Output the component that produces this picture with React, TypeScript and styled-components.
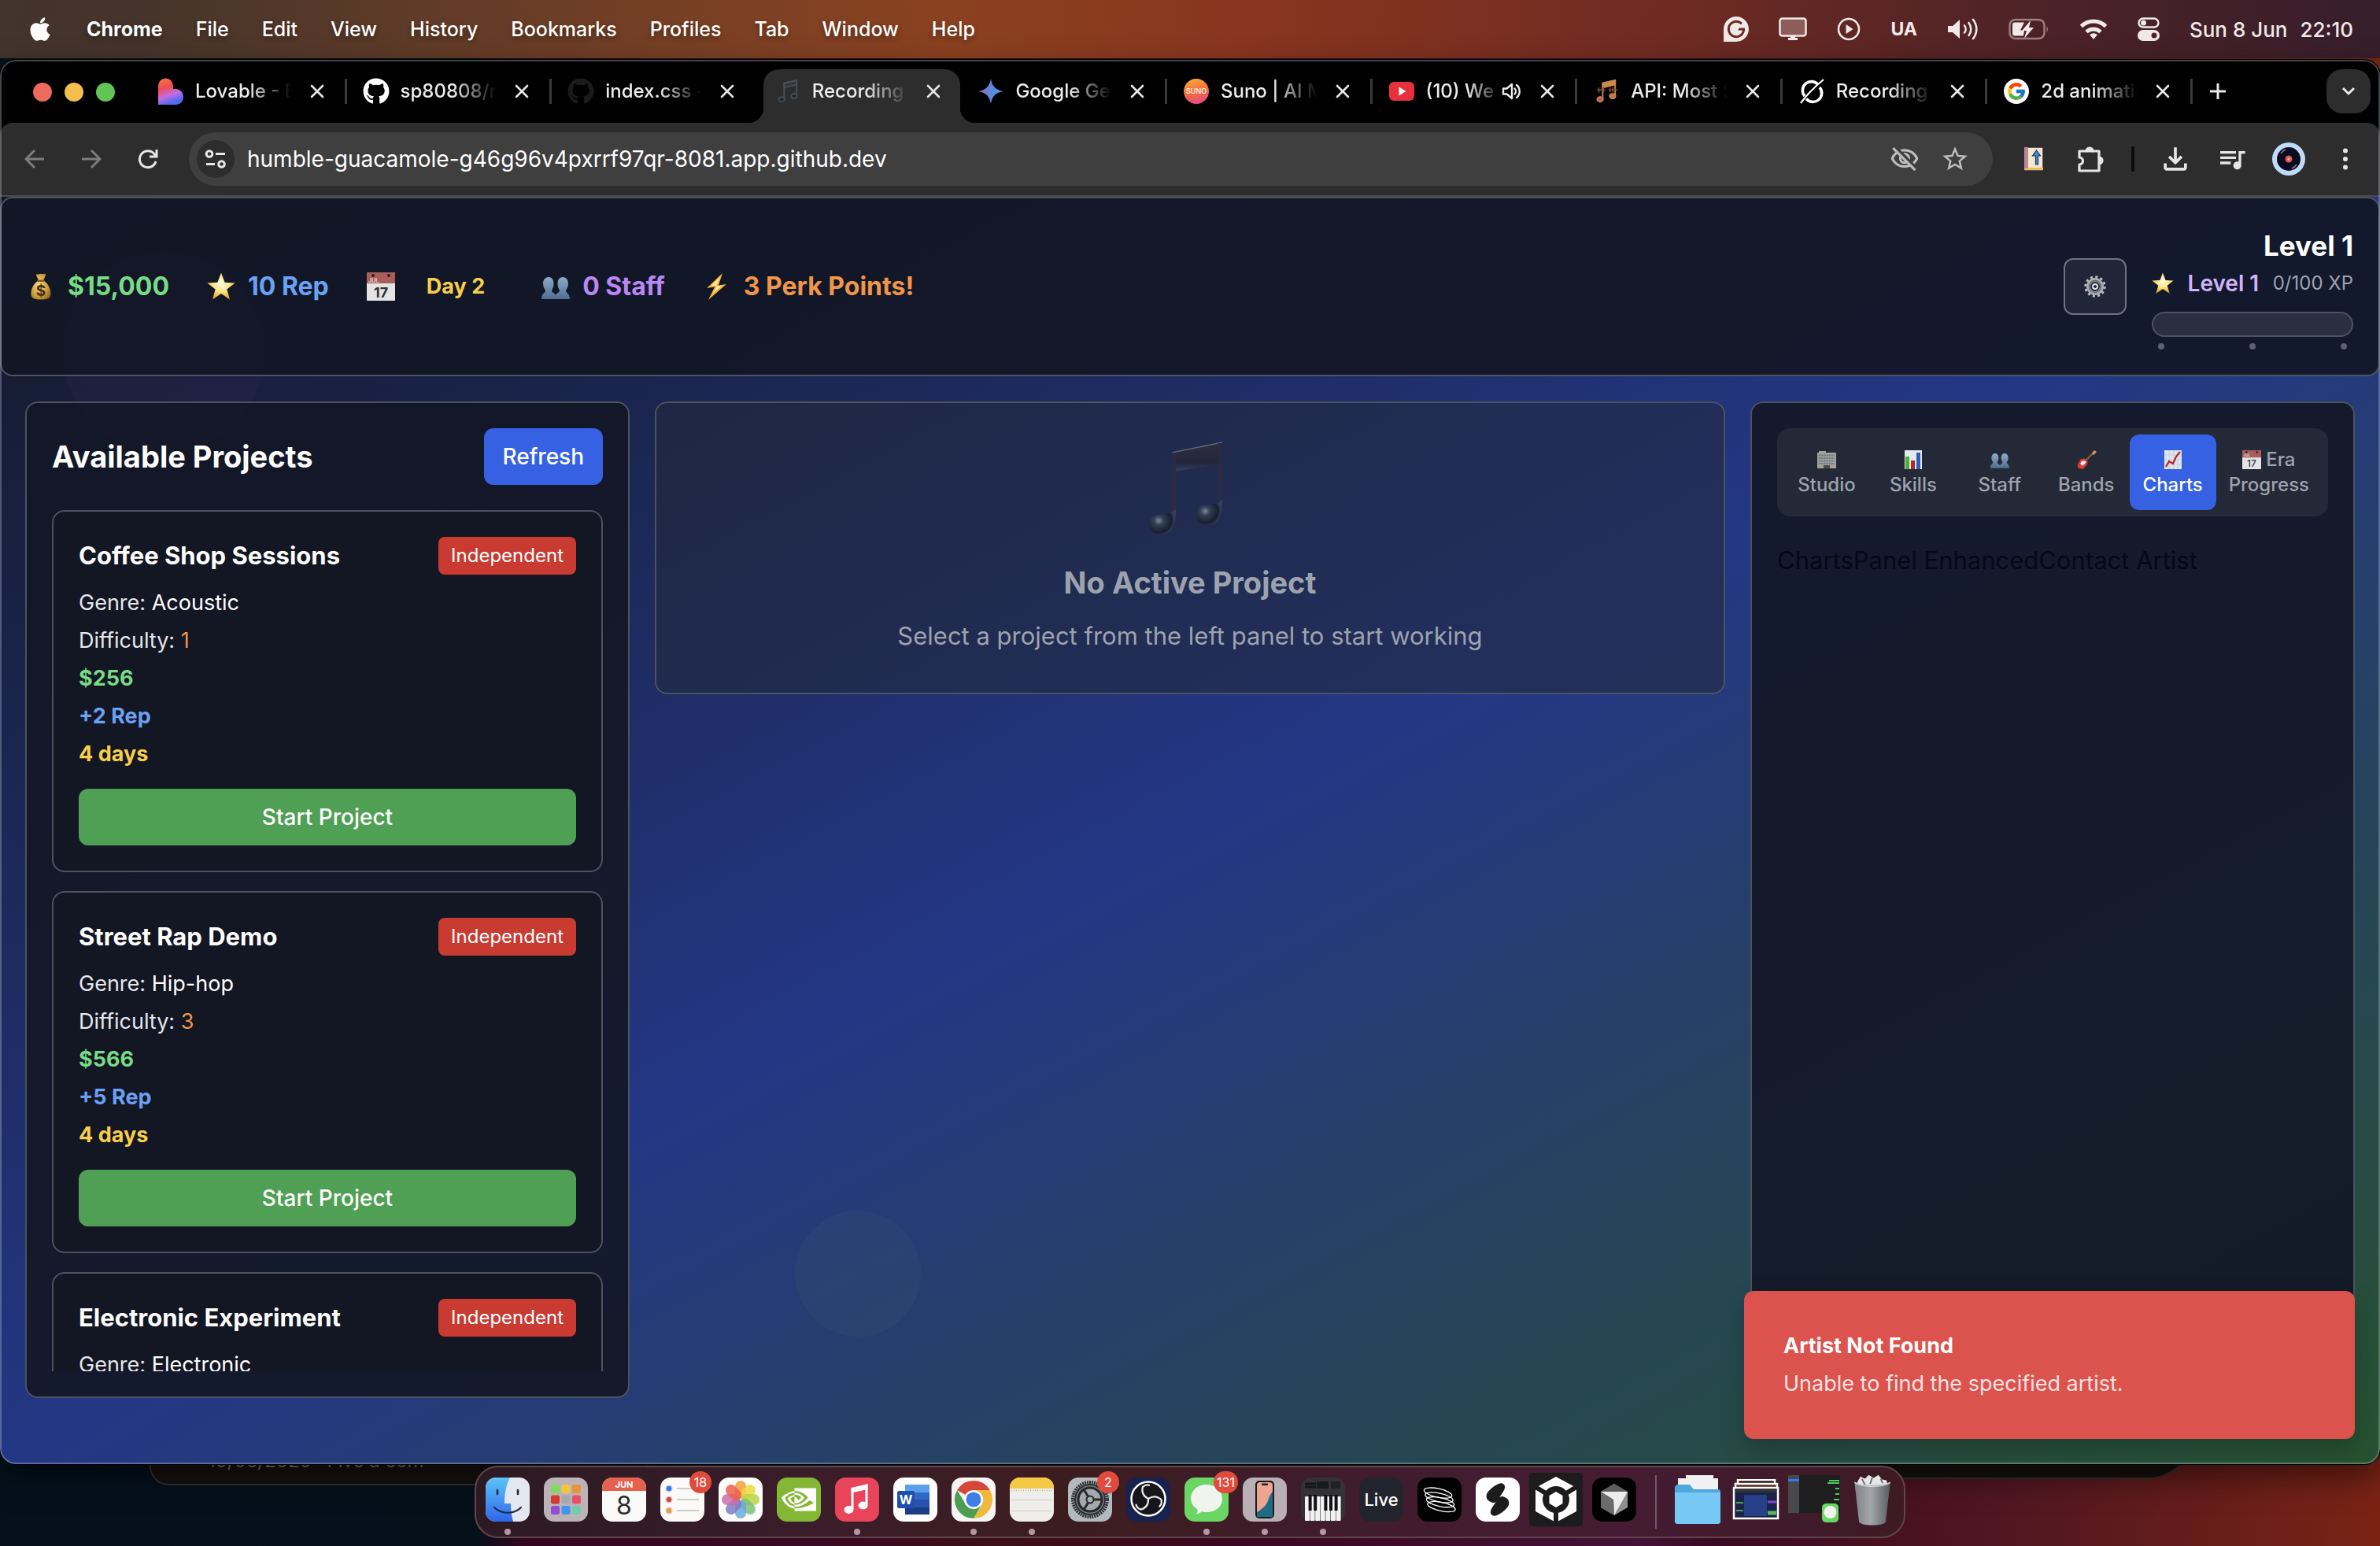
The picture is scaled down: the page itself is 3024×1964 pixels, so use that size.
import React from "react";
import styled, { createGlobalStyle, css } from "styled-components";
import { FaApple, FaGithub } from "react-icons/fa";
import { FcGoogle } from "react-icons/fc";
import { SiNvidia, SiGrammarly } from "react-icons/si";
import {
  MdStarBorder,
  MdOutlineVisibilityOff,
  MdQueueMusic,
  MdOutlineFileDownload,
} from "react-icons/md";

const GlobalStyle = createGlobalStyle`
  *, *::before, *::after { box-sizing: border-box; }
  html, body { margin: 0; padding: 0; }
  body {
    font-family: Inter, "Liberation Sans", sans-serif;
    color: #fff;
    -webkit-font-smoothing: antialiased;
  }
  button, input { font: inherit; color: inherit; border: 0; background: none; padding: 0; margin: 0; }
  h1, h2, h3, p, ul, dl { margin: 0; padding: 0; }
  ul { list-style: none; }
  svg { display: block; flex: none; }
`;

/* ---------- desktop ---------- */

const Desktop = styled.div`
  position: relative;
  display: flex;
  flex-direction: column;
  height: 100vh;
  overflow: hidden;
  background: linear-gradient(90deg, #04111d 0%, #05101b 20%, #35061d 22%, #3a0a22 35%, #3d0f16 42%, #3a0820 52%, #431236 69%, #3a0a22 72%, #541820 86%, #7a2314 100%);
`;

const MenuBar = styled.header`
  display: flex;
  align-items: center;
  justify-content: space-between;
  height: 74px;
  flex: none;
  padding: 0 34px;
  font-size: 25px;
  background: linear-gradient(90deg, #43342c 0%, #45342b 6%, #5c3a28 16%, #7a4024 30%, #8a4120 40%, #8a351f 52%, #6f2b22 70%, #4c2227 86%, #371e2b 100%);
`;

const MenuGroup = styled.nav`
  display: flex;
  align-items: center;
  gap: 42px;
`;

const MenuItem = styled.button<{ $strong?: boolean }>`
  font-weight: ${(p) => (p.$strong ? 700 : 500)};
  text-shadow: 0 3px 6px rgba(0, 0, 0, 0.35);
`;

const StatusGroup = styled.div`
  display: flex;
  align-items: center;
  gap: 38px;
  color: #f1e9e8;
`;

const InputSource = styled.span`
  font-size: 23px;
  font-weight: 700;
`;

const Clock = styled.time`
  display: flex;
  gap: 16px;
  font-size: 26px;
  font-weight: 500;
`;

/* ---------- browser ---------- */

const BrowserWindow = styled.main`
  position: relative;
  z-index: 2;
  display: flex;
  flex-direction: column;
  flex: 1;
  min-height: 0;
  margin-top: 2px;
  border-radius: 20px;
  overflow: hidden;
  background: #000;
  box-shadow: 0 0 0 1px #000, 0 16px 40px rgba(0, 0, 0, 0.5);
  &::after {
    content: "";
    position: absolute;
    inset: 0;
    border: 2px solid rgba(190, 200, 215, 0.35);
    border-radius: 20px;
    pointer-events: none;
  }
`;

const TabStrip = styled.div`
  display: flex;
  height: 80px;
  flex: none;
  padding: 12px 12px 0 0;
`;

const TrafficLights = styled.div`
  display: flex;
  gap: 16px;
  width: 180px;
  padding: 17px 0 0 42px;
`;

const Light = styled.button<{ $color: string }>`
  width: 24px;
  height: 24px;
  border-radius: 50%;
  background: ${(p) => p.$color};
`;

const Tabs = styled.div`
  display: flex;
  flex: 1;
  min-width: 0;
`;

const Tab = styled.div<{ $active?: boolean; $line?: boolean }>`
  position: relative;
  display: flex;
  align-items: center;
  flex: 1;
  min-width: 0;
  padding: 0 26px 12px 20px;
  font-size: 24px;
  font-weight: 500;
  color: #ececec;
  ${(p) =>
    p.$active &&
    css`
      margin: 0 2px 0 8px;
      padding: 0 22px 12px 14px;
      background: #2d2d2d;
      border-radius: 20px 20px 0 0;
      &::before,
      &::after {
        content: "";
        position: absolute;
        bottom: 0;
        width: 20px;
        height: 20px;
      }
      &::before {
        left: -20px;
        background: radial-gradient(circle at 0 0, transparent 20px, #2d2d2d 21px);
      }
      &::after {
        right: -20px;
        background: radial-gradient(circle at 100% 0, transparent 20px, #2d2d2d 21px);
      }
    `}
  ${(p) =>
    p.$line &&
    css`
      &::after {
        content: "";
        position: absolute;
        right: 0;
        top: 12px;
        width: 3px;
        height: 32px;
        background: #3a3a3a;
      }
    `}
`;

const Favicon = styled.span`
  display: flex;
  align-items: center;
  justify-content: center;
  width: 34px;
  height: 34px;
  margin-right: 14px;
  flex: none;
`;

const TabTitle = styled.span`
  flex: 1;
  min-width: 0;
  overflow: hidden;
  white-space: nowrap;
  line-height: 32px;
  -webkit-mask-image: linear-gradient(90deg, #000 55%, transparent 100%);
  mask-image: linear-gradient(90deg, #000 55%, transparent 100%);
`;

const IconButton = styled.button<{ $dim?: boolean }>`
  display: flex;
  align-items: center;
  justify-content: center;
  width: 36px;
  height: 36px;
  flex: none;
  color: ${(p) => (p.$dim ? "#7d7d7d" : "#e6e6e6")};
`;

const CloseSlot = styled(IconButton)`
  width: 24px;
  margin-left: 20px;
`;

const StripTail = styled.div`
  display: flex;
  justify-content: space-between;
  width: 226px;
  padding-left: 14px;
`;

const NewTab = styled(IconButton)`
  height: 56px;
`;

const TabSearch = styled(IconButton)`
  width: 56px;
  height: 56px;
  border-radius: 20px;
  background: #2d2d2d;
`;

const Toolbar = styled.div`
  display: flex;
  align-items: center;
  height: 94px;
  flex: none;
  padding: 0 26px;
  background: #2d2d2d;
  border-bottom: 2px solid #4a4a4c;
  border-radius: 16px 16px 0 0;
`;

const NavButtons = styled.div`
  display: flex;
  gap: 36px;
  margin-right: 34px;
`;

const Omnibox = styled.div`
  display: flex;
  align-items: center;
  flex: 1;
  height: 68px;
  padding: 0 30px 0 10px;
  border-radius: 34px;
  background: #3f3f3f;
  gap: 28px;
`;

const SiteInfo = styled(IconButton)`
  width: 48px;
  height: 48px;
  margin-right: -12px;
  border-radius: 50%;
  background: #2d2d2d;
`;

const UrlInput = styled.input`
  flex: 1;
  font-size: 28px;
  outline: 0;
`;

const ToolActions = styled.div`
  display: flex;
  align-items: center;
  gap: 36px;
  margin-left: 34px;
`;

const ToolDivider = styled.span`
  width: 4px;
  height: 32px;
  margin: 0 -2px;
  background: #0c0c0c;
`;

/* ---------- game page ---------- */

const Page = styled.div`
  position: relative;
  display: flex;
  flex-direction: column;
  flex: 1;
  min-height: 0;
  background: linear-gradient(to bottom right, #131826 0%, #243785 50%, #27522f 100%);
`;

const Bubble = styled.span<{ $x: string; $y: string; $size: number; $tint: string }>`
  position: absolute;
  left: ${(p) => p.$x};
  top: ${(p) => p.$y};
  width: ${(p) => p.$size}px;
  height: ${(p) => p.$size}px;
  border-radius: 50%;
  background: ${(p) => p.$tint};
`;

const panel = css`
  position: relative;
  border: 2px solid #4c525f;
  border-radius: 16px;
`;

const StatsBar = styled.header`
  ${panel}
  display: flex;
  align-items: center;
  justify-content: space-between;
  padding: 32px;
  background: rgba(18, 23, 38, 0.93);
`;

const Stats = styled.ul`
  display: flex;
  align-items: center;
  gap: 48px;
`;

const Stat = styled.li<{ $color: string }>`
  display: flex;
  align-items: center;
  gap: 16px;
  font-size: 32px;
  line-height: 48px;
  font-weight: 700;
  color: ${(p) => p.$color};
`;

const DayLabel = styled.span`
  margin: 0 24px;
  font-size: 27px;
`;

const HeaderRight = styled.div`
  display: flex;
  align-items: center;
  gap: 32px;
`;

const SettingsButton = styled.button`
  display: flex;
  align-items: center;
  justify-content: center;
  width: 80px;
  height: 72px;
  border: 2px solid #6c7280;
  border-radius: 12px;
  background: #212538;
`;

const LevelBox = styled.div`
  display: flex;
  flex-direction: column;
  width: 256px;
`;

const LevelTitle = styled.h1`
  font-size: 35px;
  line-height: 56px;
  font-weight: 700;
  text-align: right;
`;

const LevelRow = styled.div`
  display: flex;
  align-items: center;
  justify-content: space-between;
  line-height: 40px;
  margin-bottom: 16px;
`;

const LevelName = styled.span`
  font-size: 28px;
  font-weight: 600;
  color: #d3b4fa;
`;

const XpText = styled.span`
  font-size: 24px;
  color: #9da3ae;
`;

const XpTrack = styled.div`
  height: 32px;
  border: 2px solid #4c525f;
  border-radius: 16px;
  background: #292e40;
`;

const XpDots = styled.div`
  display: flex;
  justify-content: space-between;
  padding: 8px 8px 0;
  span {
    width: 8px;
    height: 8px;
    border-radius: 50%;
    background: #5b6170;
  }
`;

const Columns = styled.div`
  display: grid;
  grid-template-columns: 768px minmax(0, 1fr) 768px;
  gap: 32px;
  flex: 1;
  min-height: 0;
  padding: 32px 32px 84px;
`;

const SidePanel = styled.section`
  ${panel}
  display: flex;
  flex-direction: column;
  min-height: 0;
  padding: 32px;
  background: rgba(19, 24, 39, 0.93);
`;

const PanelHeader = styled.div`
  display: flex;
  align-items: center;
  justify-content: space-between;
  margin-bottom: 32px;
`;

const PanelTitle = styled.h2`
  font-size: 38px;
  line-height: 56px;
  font-weight: 700;
`;

const ActionButton = styled.button<{ $tone: "blue" | "green" }>`
  height: 72px;
  padding: 0 24px;
  border-radius: 12px;
  font-size: 28px;
  font-weight: 500;
  background: ${(p) => (p.$tone === "blue" ? "#3761e3" : "#4fa054")};
`;

const ProjectList = styled.div`
  display: flex;
  flex-direction: column;
  gap: 24px;
  flex: 1;
  min-height: 0;
  overflow: hidden;
`;

const ProjectCard = styled.article`
  display: flex;
  flex-direction: column;
  flex: none;
  padding: 32px;
  border: 2px solid #4c525f;
  border-radius: 16px;
  background: #131623;
`;

const CardHead = styled.div`
  display: flex;
  align-items: center;
  justify-content: space-between;
  margin-bottom: 16px;
`;

const CardTitle = styled.h3`
  font-size: 31px;
  line-height: 48px;
  font-weight: 700;
`;

const Badge = styled.span`
  padding: 0 16px;
  border-radius: 8px;
  font-size: 24px;
  line-height: 48px;
  font-weight: 400;
  background: #c93a31;
`;

const CardFacts = styled.ul`
  display: flex;
  flex-direction: column;
  gap: 8px;
  margin-bottom: 24px;
`;

const Fact = styled.li<{ $color?: string }>`
  font-size: 27px;
  line-height: 40px;
  font-weight: ${(p) => (p.$color ? 700 : 400)};
  color: ${(p) => p.$color ?? "#e5e7eb"};
`;

const FactValue = styled.span<{ $color: string }>`
  color: ${(p) => p.$color};
`;

const EmptyCard = styled.section`
  ${panel}
  align-self: start;
  display: flex;
  flex-direction: column;
  align-items: center;
  padding: 48px;
  color: #9da3ae;
  background: rgba(34, 40, 56, 0.52);
`;

const EmptyTitle = styled.h2`
  margin: 32px 0 16px;
  font-size: 38px;
  line-height: 56px;
  font-weight: 700;
`;

const EmptyText = styled.p`
  font-size: 31px;
  line-height: 48px;
`;

const SectionTabs = styled.div`
  display: grid;
  grid-template-columns: repeat(6, 1fr);
  padding: 8px;
  margin-bottom: 32px;
  border-radius: 16px;
  background: #232936;
`;

const SectionTab = styled.button<{ $active?: boolean }>`
  display: flex;
  flex-direction: column;
  align-items: center;
  padding: 16px;
  border-radius: 12px;
  font-size: 24px;
  line-height: 32px;
  font-weight: 500;
  color: ${(p) => (p.$active ? "#fff" : "#9da3ae")};
  background: ${(p) => (p.$active ? "#3761e3" : "transparent")};
`;

const TabIconLine = styled.span`
  display: flex;
  align-items: center;
  gap: 6px;
  height: 32px;
`;

const DebugText = styled.p`
  font-size: 31px;
  line-height: 48px;
  color: #040817;
`;

const Toast = styled.div`
  position: absolute;
  right: 32px;
  bottom: 32px;
  width: 776px;
  padding: 50px;
  border-radius: 12px;
  background: #dc524c;
  box-shadow: 0 12px 30px rgba(0, 0, 0, 0.22);
  font-size: 27px;
  line-height: 40px;
`;

const ToastTitle = styled.h3`
  margin-bottom: 8px;
  font-size: 27px;
  font-weight: 700;
`;

const ToastBody = styled.p`
  color: #f9e4e3;
`;

/* ---------- dock ---------- */

const DockArea = styled.footer`
  position: relative;
  display: flex;
  justify-content: center;
  align-items: flex-start;
  height: 104px;
  padding-top: 2px;
  flex: none;
`;

const BackWindow = styled.div<{ $left: string; $right: string; $bottom: string; $radius: string }>`
  position: absolute;
  top: -40px;
  left: ${(p) => p.$left};
  right: ${(p) => p.$right};
  bottom: ${(p) => p.$bottom};
  border: 2px solid #35302e;
  border-radius: ${(p) => p.$radius};
  background: #161110;
`;

const BackText = styled.p`
  padding: 18px 0 0 72px;
  font-size: 24px;
  line-height: 32px;
  white-space: pre;
  color: #77706d;
`;

const Dock = styled.nav`
  position: relative;
  z-index: 3;
  display: flex;
  padding: 0 3px;
  height: 92px;
  border: 2px solid #5f444c;
  border-radius: 30px;
  background: linear-gradient(90deg, #2c1a22, #3b1d2a 25%, #3b1d1f 42%, #401c2c 60%, #451c33 80%, #3d1a24);
`;

const DockItem = styled.button<{ $running?: boolean }>`
  position: relative;
  display: flex;
  justify-content: center;
  width: 74px;
  padding-top: 13px;
  ${(p) =>
    p.$running &&
    css`
      &::after {
        content: "";
        position: absolute;
        bottom: 2px;
        width: 8px;
        height: 8px;
        border-radius: 50%;
        background: #b795a2;
      }
    `}
`;

const DockBadge = styled.span`
  position: absolute;
  top: 5px;
  left: 46px;
  min-width: 28px;
  height: 28px;
  padding: 0 4px;
  border-radius: 14px;
  font-size: 16px;
  line-height: 28px;
  text-align: center;
  background: #e04b3d;
`;

const DockDivider = styled.span`
  width: 2px;
  height: 68px;
  margin: 10px 15px;
  background: #75566a;
`;

/* ---------- drawings ---------- */

const CloseGlyph = () => (
  <svg width="18" height="18" viewBox="0 0 18 18" stroke="currentColor" strokeWidth="2.6" strokeLinecap="round">
    <path d="M2 2l14 14M16 2L2 16" />
  </svg>
);

const LovableIcon = () => (
  <svg width="34" height="34" viewBox="0 0 34 34">
    <defs>
      <linearGradient id="lov" x1="0" y1="0" x2=".35" y2="1">
        <stop offset="0" stopColor="#f5803a" />
        <stop offset=".4" stopColor="#ee4b55" />
        <stop offset=".7" stopColor="#c86be0" />
        <stop offset="1" stopColor="#4d6cf0" />
      </linearGradient>
    </defs>
    <path d="M1 34V10a9.500 9.500 0 0 1 19 0v4h4a9.500 9.500 0 0 1 9 10c0 6-4 10-10 10z" fill="url(#lov)" />
  </svg>
);

const GeminiIcon = () => (
  <svg width="32" height="32" viewBox="0 0 32 32">
    <defs>
      <linearGradient id="gem" x1="0" y1=".5" x2="1" y2=".5">
        <stop offset="0" stopColor="#9a6cb8" />
        <stop offset=".5" stopColor="#5f86dc" />
        <stop offset="1" stopColor="#3fa4e0" />
      </linearGradient>
    </defs>
    <path d="M16 0c1.400 9.500 6.500 14.600 16 16-9.500 1.400-14.600 6.500-16 16-1.400-9.500-6.500-14.600-16-16C9.500 14.600 14.600 9.500 16 0z" fill="url(#gem)" />
  </svg>
);

const SunoIcon = () => (
  <svg width="32" height="32" viewBox="0 0 32 32">
    <defs>
      <linearGradient id="suno" x1=".3" y1="0" x2=".6" y2="1">
        <stop offset="0" stopColor="#f7a93b" />
        <stop offset=".55" stopColor="#f36a3c" />
        <stop offset="1" stopColor="#ea4a86" />
      </linearGradient>
    </defs>
    <circle cx="16" cy="16" r="16" fill="url(#suno)" />
    <text x="16" y="19" fontSize="9" fill="#fff" textAnchor="middle">SUNO</text>
  </svg>
);

const YouTubeIcon = () => (
  <svg width="32" height="24" viewBox="0 0 32 24">
    <rect width="32" height="24" rx="6" fill="#e8303a" />
    <path d="M12.500 6.500v11l9-5.500z" fill="#fff" />
  </svg>
);

const NoteFavicon = ({ warm }: { warm?: boolean }) => (
  <svg width="28" height="30" viewBox="0 0 30 32">
    <g stroke={warm ? "#c98a4b" : "#46505c"} strokeWidth="2" fill={warm ? "#c98a4b" : "#3b3439"}>
      <path d="M10 26V5l17-4v20" fill="none" />
      <path d="M10 5l17-4v6l-17 4z" />
      <ellipse cx="6.500" cy="27" rx="4" ry="3.200" fill={warm ? "#b5527c" : "#1f2730"} />
      <ellipse cx="23.500" cy="22.500" rx="4" ry="3.200" fill={warm ? "#c46a4f" : "#1f2730"} />
    </g>
    {warm && <path d="M2 14h12M5 11v7M11 10v8M18 14h12M20 11v6M24 10v8" stroke="#8b4a3a" strokeWidth="1.600" />}
  </svg>
);

const GrokIcon = () => (
  <svg width="34" height="34" viewBox="0 0 34 34" fill="none" stroke="#fff">
    <path d="M25 8.500A11 11 0 0 0 8 23M10 26.500A11 11 0 0 0 27 12" strokeWidth="3.600" />
    <path d="M3 32C10 22 20 12 32 2" strokeWidth="2.200" />
  </svg>
);

const SpeakerIcon = () => (
  <svg width="26" height="26" viewBox="0 0 26 26" fill="none" stroke="currentColor" strokeWidth="2.400" strokeLinecap="round">
    <path d="M2 9.500h4.500L13 4v18l-6.500-5.500H2z" strokeLinejoin="round" />
    <path d="M16.500 9.500a5 5 0 0 1 0 7M19 5a10.500 10.500 0 0 1 0 16" />
  </svg>
);

const PuzzleIcon = () => (
  <svg width="36" height="36" viewBox="0 0 36 36" fill="none" stroke="currentColor" strokeWidth="3.200" strokeLinejoin="round">
    <path d="M4 8h9a4 4 0 0 1 8 0h8v8a4 4 0 0 1 0 8v9H4v-8a4.500 4.500 0 0 0 0-9z" />
    <path d="M13.500 8a3.500 3.500 0 0 1 7 0zM29 16.500a3.500 3.500 0 0 1 0 7z" fill="currentColor" />
  </svg>
);

const GoogleBadge = () => (
  <svg width="32" height="32" viewBox="0 0 32 32">
    <circle cx="16" cy="16" r="16" fill="#fff" />
    <g transform="translate(3 3)">
      <FcGoogle size={26} />
    </g>
  </svg>
);

const MoneyBag = () => (
  <svg width="36" height="36" viewBox="0 0 36 36">
    <defs>
      <radialGradient id="bag" cx=".4" cy=".45" r=".7">
        <stop offset="0" stopColor="#f5dc86" />
        <stop offset=".6" stopColor="#cf9f3e" />
        <stop offset="1" stopColor="#8c6118" />
      </radialGradient>
    </defs>
    <path d="M12 2c3 2 4-1 6 0s4-1 6 0c0 3-2 6-3 8 6 4 10 11 9.500 18-.3 5-4 6.500-12.500 6.500S5.800 33 5.500 28C5 21 9 14 15 10c-1-2-3-5-3-8z" fill="url(#bag)" />
    <path d="M13.500 9.500h9v2.600h-9z" fill="#8b5a1c" />
    <text x="18" y="30" fontSize="19" fontWeight="700" fill="#3f2f12" textAnchor="middle">$</text>
  </svg>
);

const StarEmoji = ({ size = 36 }: { size?: number }) => (
  <svg width={size} height={size} viewBox="0 0 36 36">
    <defs>
      <radialGradient id="star" cx=".5" cy=".4" r=".6">
        <stop offset="0" stopColor="#fffbe2" />
        <stop offset=".5" stopColor="#fbe58a" />
        <stop offset="1" stopColor="#e8a72c" />
      </radialGradient>
    </defs>
    <path d="M18 0.500l4.600 12.300 13 .6-10.200 8.100L29 34.500 18 27 7 34.500l3.600-13L.4 13.400l13-.6z" fill="url(#star)" />
  </svg>
);

const CalendarEmoji = ({ size = 36 }: { size?: number }) => (
  <svg width={size} height={size} viewBox="0 0 36 36">
    <rect width="36" height="36" rx="1" fill="#e4e4e6" />
    <rect width="36" height="14" rx="1" fill="#a85f5c" />
    <circle cx="8" cy="4" r="2" fill="#331f1f" />
    <circle cx="28" cy="4" r="2" fill="#331f1f" />
    <text x="2" y="12.500" fontSize="7" fontWeight="700" fill="#e8c9c8">JUL</text>
    <text x="18" y="32" fontSize="18" fill="#333" textAnchor="middle">17</text>
  </svg>
);

const PeopleEmoji = ({ size = 36 }: { size?: number }) => (
  <svg width={size} height={size} viewBox="0 0 36 36">
    <defs>
      <linearGradient id="ppl" x1="0" y1="0" x2="0" y2="1">
        <stop offset="0" stopColor="#8fabc6" />
        <stop offset="1" stopColor="#4f6d90" />
      </linearGradient>
    </defs>
    <path d="M9 6c4.500 0 6.500 4 6.500 8.500 0 4-1.500 6.500-2.500 8.500 0 3 4 3 5 6 1-3 5-3 5-6-1-2-2.500-4.500-2.500-8.500C20.500 10 22.500 6 27 6s7 4 7 8.500c0 4-2 6.500-3 8.500 0 4 5 3 5 11H0c0-8 5-7 5-11-1-2-3-4.500-3-8.500C2 10 4.500 6 9 6z" fill="url(#ppl)" />
  </svg>
);

const BoltEmoji = () => (
  <svg width="36" height="36" viewBox="0 0 36 36">
    <path d="M25 1L5 20l10-1.500L7 35l23-20-10 1.500z" fill="#f3ac35" />
    <path d="M22.500 5L10 17.500l8.500-1L12 28l13-11.500-8 1z" fill="#fdeb9c" />
  </svg>
);

const GearEmoji = () => (
  <svg width="28" height="28" viewBox="0 0 28 28" fill="none">
    <circle cx="14" cy="14" r="12" stroke="#b9bcc1" strokeWidth="3.500" strokeDasharray="3 3.280" />
    <circle cx="14" cy="14" r="8.500" stroke="#a9acb1" strokeWidth="5" />
    <circle cx="14" cy="14" r="7.500" stroke="#63666d" strokeWidth="1.600" />
    <circle cx="14" cy="14" r="3" stroke="#e0e2e6" strokeWidth="2" />
  </svg>
);

const BuildingEmoji = () => (
  <svg width="24" height="24" viewBox="0 0 24 24">
    <path d="M0 3h2V1h9v2h13v20H0z" fill="#a3a198" />
    <path d="M2 6.500h20M2 10h20M2 13.500h20M2 17h20" stroke="#62798c" strokeWidth="2" strokeDasharray="2.200 1" />
    <rect x="8" y="19" width="8" height="4" fill="#4b4b48" />
  </svg>
);

const BarsEmoji = () => (
  <svg width="22" height="24" viewBox="0 0 22 24">
    <rect width="22" height="24" fill="#e4e9ef" />
    <rect x="1" y="8" width="5" height="16" fill="#4caf3a" />
    <rect x="8" y="13" width="5" height="11" fill="#b8261f" />
    <rect x="15" y="3" width="5" height="21" fill="#2b5fb8" />
  </svg>
);

const GuitarEmoji = () => (
  <svg width="26" height="24" viewBox="0 0 26 24">
    <path d="M11 14L23 2" stroke="#8a5a3a" strokeWidth="2.400" />
    <path d="M20 4l3-4 3 2-4 4z" fill="#d99a5b" />
    <path d="M5 12c1.500-2 3 0 5-2l5 5c-2 2 0 3-2 4.500-2 1-2 3.500-5.500 4.500C3 24 1 21 2 18c.500-2.500 2-3 3-6z" fill="#d8362e" />
    <path d="M7 14c1.500-1.500 3 0 4.500-.5l1.500 1.500-5 5-3-3z" fill="#f3ece6" />
  </svg>
);

const TrendEmoji = () => (
  <svg width="22" height="24" viewBox="0 0 22 24">
    <rect width="22" height="24" fill="#dfe4ea" />
    <path d="M0 6h22M0 12h22M0 18h22M6 0v24M12 0v24M17 0v24" stroke="#c2cad3" strokeWidth=".7" />
    <path d="M2 21l4-7 5 3 4-9 5-6" fill="none" stroke="#b5242b" strokeWidth="2.200" />
  </svg>
);

const BigNotes = () => (
  <svg width="120" height="120" viewBox="0 0 120 120">
    <defs>
      <linearGradient id="beam" x1="0" y1="0" x2="0" y2="1">
        <stop offset="0" stopColor="#2e2d3e" />
        <stop offset=".7" stopColor="#22263c" />
        <stop offset="1" stopColor="#33425f" />
      </linearGradient>
      <radialGradient id="head" cx=".36" cy=".45" r=".6">
        <stop offset="0" stopColor="#7b889c" />
        <stop offset=".3" stopColor="#323f55" />
        <stop offset=".8" stopColor="#191d30" />
        <stop offset="1" stopColor="#33415a" />
      </radialGradient>
    </defs>
    <path d="M37 15L101 2v26L42 39z" fill="url(#beam)" />
    <path d="M37 15L101 2" stroke="#5c6577" strokeWidth="1.600" />
    <path d="M39.500 15v86M98.500 3v86" stroke="#292c40" strokeWidth="5" />
    <path d="M42 87c0 20-5 32-18 32-10 0-16-6-16-14C8 94 20 94 28 93c6-1 10-3 14-6z" fill="url(#head)" />
    <path d="M101 75c0 20-5 32-18 32-10 0-16-6-16-14 0-11 12-11 20-12 6-1 10-3 14-6z" fill="url(#head)" />
  </svg>
);

const DockTile = ({ fill, children }: { fill: string; children?: React.ReactNode }) => (
  <svg width="56" height="56" viewBox="0 0 56 56" overflow="visible">
    <rect width="56" height="56" rx="13" fill={fill} />
    {children}
  </svg>
);

const Finder = () => (
  <DockTile fill="#e3e8f0">
    <defs>
      <linearGradient id="fin" x1="0" y1="0" x2="0" y2="1">
        <stop offset="0" stopColor="#5cc4f8" />
        <stop offset="1" stopColor="#2f66ea" />
      </linearGradient>
    </defs>
    <path d="M13 0h18c-5 10-7 20-7 33h8c0 8 1 16 3 23H13A13 13 0 0 1 0 43V13A13 13 0 0 1 13 0z" fill="url(#fin)" />
    <path d="M15 16v5M41 16v5" stroke="#1c2c48" strokeWidth="2.600" strokeLinecap="round" />
    <path d="M11 38c9 9 25 9 34 0" fill="none" stroke="#1c2c48" strokeWidth="2.200" strokeLinecap="round" />
  </DockTile>
);

const Launchpad = () => (
  <DockTile fill="#bcb3b9">
    {["#7ddc5a", "#f0c63f", "#e6963a", "#d3392c", "#a3a9ae", "#ea5064", "#8f4fd0", "#3f95f0", "#6fd0a8"].map((c, i) => (
      <rect key={c} x={9 + (i % 3) * 13.5} y={9 + Math.floor(i / 3) * 13.5} width="11" height="11" rx="2.500" fill={c} />
    ))}
  </DockTile>
);

const CalendarApp = () => (
  <DockTile fill="#fafaf8">
    <path d="M13 0h30a13 13 0 0 1 13 13v4H0v-4A13 13 0 0 1 13 0z" fill="#e4604f" />
    <text x="28" y="13" fontSize="11" fontWeight="700" fill="#fff" textAnchor="middle">JUN</text>
    <text x="28" y="47" fontSize="32" fill="#2c2c2c" textAnchor="middle">8</text>
  </DockTile>
);

const Reminders = () => (
  <DockTile fill="#fbfaf8">
    {["#3478f6", "#e0483e", "#ef9a37"].map((c, i) => (
      <g key={c}>
        <circle cx="11" cy={14 + i * 14} r="4" fill={c} stroke="#cfd8ea" strokeWidth="1.500" />
        <path d={`M21 ${14 + i * 14}h28`} stroke="#cfcdca" strokeWidth="2" />
      </g>
    ))}
  </DockTile>
);

const Photos = () => (
  <DockTile fill="#fdfdfc">
    {["#f2a03c", "#ecd93e", "#b8d547", "#7cc07d", "#6ba8de", "#7f7dc2", "#c76fae", "#ea6050"].map((c, i) => (
      <rect key={c} x="21" y="4" width="14" height="23" rx="7" fill={c} opacity=".85" transform={`rotate(${i * 45} 28 28)`} />
    ))}
  </DockTile>
);

const NvidiaApp = () => (
  <DockTile fill="#84b735">
    <g transform="translate(6 6)" color="#fff">
      <SiNvidia size={44} />
    </g>
  </DockTile>
);

const MusicApp = () => (
  <DockTile fill="#e9455a">
    <path d="M22 40V15l18-5v24" fill="none" stroke="#fff" strokeWidth="3" />
    <path d="M20.500 13l21-4.500V15l-21 4.500z" fill="#fff" />
    <ellipse cx="17.500" cy="41" rx="6" ry="5" fill="#fff" />
    <ellipse cx="35.500" cy="35.500" rx="6" ry="5" fill="#fff" />
  </DockTile>
);

const WordApp = () => (
  <DockTile fill="#ffffff">
    <rect x="15" y="9" width="31" height="38" rx="2" fill="#3068c6" />
    <rect x="15" y="9" width="31" height="10" fill="#5aa0ea" />
    <rect x="15" y="28" width="31" height="10" fill="#2553ae" />
    <rect x="15" y="38" width="31" height="9" fill="#1c3c88" />
    <rect x="5" y="17" width="22" height="22" rx="2" fill="#1f4fae" />
    <text x="16" y="34" fontSize="16" fontWeight="700" fill="#fff" textAnchor="middle">W</text>
  </DockTile>
);

const ChromeApp = () => (
  <DockTile fill="#f6f5f4">
    <path d="M28 28L7.200 16a24 24 0 0 1 41.600 0z" fill="#d8453a" />
    <path d="M28 16h20.800A24 24 0 0 1 28 52l11-18z" fill="#f0b93d" />
    <path d="M28 52A24 24 0 0 1 7.200 16L18 34l20.500 0z" fill="#4a9e52" />
    <circle cx="28" cy="28" r="12" fill="#fff" />
    <circle cx="28" cy="28" r="9.500" fill="#3f7de8" />
  </DockTile>
);

const NotesApp = () => (
  <DockTile fill="#efeeea">
    <path d="M13 0h30a13 13 0 0 1 13 13v1H0v-1A13 13 0 0 1 13 0z" fill="#f5c944" />
    <path d="M2 28.500h52M2 42.500h52" stroke="#cfcdc8" strokeWidth="1.200" />
    <path d="M2 16.500h52" stroke="#b5b3ae" strokeWidth="1.500" strokeDasharray="1 2" />
  </DockTile>
);

const SettingsApp = () => (
  <DockTile fill="#b3b9bd">
    <circle cx="28" cy="28" r="22" fill="none" stroke="#2c2e31" strokeWidth="4" strokeDasharray="2 1" />
    <circle cx="28" cy="28" r="19" fill="#777c80" stroke="#2c2e31" strokeWidth="2" />
    <circle cx="28" cy="28" r="15" fill="#a3a8ac" stroke="#26282a" strokeWidth="3" />
    <path d="M28 28h15M28 28l-8-13M28 28l-8 13" stroke="#26282a" strokeWidth="3" />
    <circle cx="28" cy="28" r="4.500" fill="#a9adb0" stroke="#26282a" strokeWidth="2" />
  </DockTile>
);

const ObsApp = () => (
  <DockTile fill="#17224f">
    <circle cx="28" cy="27" r="21.500" fill="#161519" stroke="#fff" strokeWidth="2.500" />
    {[0, 120, 240].map((r) => (
      <path key={r} d="M28 27c-6-3-9-8-7-16M21 12c3-3 6-3 9-2" fill="none" stroke="#e9e9ec" strokeWidth="2.200" transform={`rotate(${r} 28 27)`} />
    ))}
  </DockTile>
);

const MessagesApp = () => (
  <DockTile fill="#6bd663">
    <path d="M28 9c12 0 20 8 20 18s-8 17-20 17c-2 0-4 0-6-1-2 2-4 3-7 3 2-2 2-4 1-6-5-3-8-8-8-13C8 17 16 9 28 9z" fill="#f0f4ee" />
  </DockTile>
);

const PhoneApp = () => (
  <DockTile fill="#b9afb5">
    <rect x="16" y="4" width="24" height="48" rx="5" fill="#1b1d22" />
    <rect x="18" y="6" width="20" height="44" rx="4" fill="#eba591" />
    <path d="M38 18c-8 8-2 16-20 26v6h20z" fill="#1f6b86" />
    <rect x="24" y="7.500" width="8" height="2.500" rx="1" fill="#1b1d22" />
  </DockTile>
);

const PianoApp = () => (
  <DockTile fill="#333335">
    <path d="M5 8h14M5 12h14" stroke="#161617" strokeWidth="3" />
    <rect x="20" y="5" width="15" height="9" fill="#18191a" />
    <rect x="38" y="5" width="12" height="9" fill="#202122" />
    {[0, 1, 2, 3, 4, 5, 6].map((i) => (
      <rect key={i} x={5 + i * 6.600} y="24" width="6" height="31" rx="1" fill="#f3f3f3" />
    ))}
    {[1, 2, 4, 5, 6].map((i) => (
      <rect key={i} x={3 + i * 6.600} y="22" width="4" height="20" fill="#111" />
    ))}
  </DockTile>
);

const LiveApp = () => (
  <DockTile fill="#22252d">
    <text x="28" y="36" fontSize="22" fontWeight="500" fill="#fff" textAnchor="middle">Live</text>
  </DockTile>
);

const CoilApp = () => (
  <DockTile fill="#020202">
    <g fill="none" stroke="#fff" strokeWidth="1.300">
      {[0, 1, 2, 3].map((i) => (
        <ellipse key={i} cx={26 + i * 1.5} cy={20 + i * 5.5} rx="18" ry="5.500" transform={`rotate(12 28 ${20 + i * 5.5})`} />
      ))}
    </g>
  </DockTile>
);

const SpliceApp = () => (
  <DockTile fill="#fff">
    {[0, 180].map((r) => (
      <path
        key={r}
        d="M36 9c2 2 1 6-1 9l-8 12c-2 2-5 3-8 1-5-2-7-7-4-12 3-4 9-9 14-11 3-1 5-1 7 1z"
        fill="#1c1c1c"
        transform={`rotate(${r} 28 28)`}
      />
    ))}
  </DockTile>
);

const CubeApp = () => (
  <svg width="68" height="68" viewBox="0 0 68 68">
    <rect width="68" height="68" rx="4" fill="#1c1c1c" />
    <path d="M34 5l26 14v30L34 63 8 49V19z" fill="#fff" />
    <path d="M34 34L8 18M34 34l26-16M34 34v30" stroke="#1c1c1c" strokeWidth="6" />
    <circle cx="34" cy="34" r="17" fill="#1c1c1c" />
    <path d="M34 24l8.500 5v10L34 44l-8.500-5V29z" fill="#fff" />
  </svg>
);

const CursorApp = () => (
  <DockTile fill="#020202">
    <path d="M28 8l17 10v20L28 48 11 38V18z" fill="#8f8f8f" />
    <path d="M28 8l17 10H11z" fill="#5d5d5d" />
    <path d="M11 18h34L28 48l-1-20z" fill="#ececec" />
    <path d="M11 18l16 10 1 20-17-10z" fill="#6b6b6b" />
  </DockTile>
);

const FolderApp = () => (
  <svg width="60" height="66" viewBox="0 0 60 66">
    <path d="M5 6h10V2h35v4h6v28H5z" fill="#f1f1f1" />
    <path d="M1 19q0-5 4-5h15l5 6h31q3 0 3 3v37q0 4-4 4H5q-4 0-4-4z" fill="#4fa8dd" />
    <path d="M1 24h58v36q0 4-4 4H5q-4 0-4-4z" fill="#78c8f6" />
  </svg>
);

const StackApp = () => (
  <svg width="60" height="52" viewBox="0 0 60 52">
    <rect x="7" y="1" width="47" height="20" fill="#2a1711" stroke="#fff" strokeWidth="2.500" />
    <rect x="4" y="6" width="53" height="20" fill="#5a2616" stroke="#fff" strokeWidth="2.500" />
    <rect x="2" y="11" width="56" height="39" fill="#1b2448" stroke="#fff" strokeWidth="2.500" />
    <path d="M4 14.500h52" stroke="#343436" strokeWidth="4" />
    <rect x="15" y="20" width="29" height="27" fill="#27408a" />
    <path d="M5 30h9M5 40h9" stroke="#4fa054" strokeWidth="2" />
    <path d="M45 29h11" stroke="#8b44d8" strokeWidth="3" />
    <path d="M45 43h11" stroke="#5bb75f" strokeWidth="5" />
  </svg>
);

const ChatThumb = () => (
  <svg width="66" height="62" viewBox="0 0 66 62">
    <rect width="66" height="48" fill="#1d1e1d" />
    <rect width="14" height="48" fill="#47494a" />
    <rect y="5" width="14" height="3" fill="#2f7af0" />
    <path d="M52 7h13M50 10h15M60 17h5M60 24h5M58 31h7" stroke="#4fcb58" strokeWidth="2" />
    <rect x="43" y="36" width="21" height="24" rx="5" fill="#6bd663" />
    <circle cx="53.500" cy="47" r="8" fill="#f0f4ee" />
  </svg>
);

const TrashApp = () => (
  <svg width="50" height="68" viewBox="0 0 50 72">
    <defs>
      <linearGradient id="bin" x1="0" y1="0" x2="1" y2="0">
        <stop offset="0" stopColor="#7e8286" />
        <stop offset=".45" stopColor="#a3a7aa" />
        <stop offset="1" stopColor="#585b5f" />
      </linearGradient>
    </defs>
    <path d="M4 14l5-9 6 3 5-5 7 4 6-4 5 6 6 1 2 8-21 7z" fill="#e7e7e7" />
    <path d="M11 8l4 8M25 6l-3 9M36 8l3 6" stroke="#6f6f72" strokeWidth="2" />
    <path d="M1 13c10 5 38 5 48 0l-6 53c-1 6-35 6-36 0z" fill="url(#bin)" />
    <path d="M1 13c10 7 38 7 48 0" fill="none" stroke="#c8cacc" strokeWidth="2" />
  </svg>
);

/* Large and irregular artwork is centred on the same line as the 56px tiles. */
const DockArt = styled.span`
  display: flex;
  align-items: center;
  height: 56px;
`;

/* ---------- data ---------- */

const menus = ["File", "Edit", "View", "History", "Bookmarks", "Profiles", "Tab", "Window", "Help"];

const browserTabs = [
  { title: "Lovable - Build", icon: <LovableIcon />, line: true },
  { title: "sp80808/rec", icon: <FaGithub size={34} color="#fff" />, line: true },
  { title: "index.css - rec", icon: <FaGithub size={34} color="#1d1a1b" /> },
  { title: "Recording", icon: <NoteFavicon />, active: true },
  { title: "Google Gemini", icon: <GeminiIcon />, line: true },
  { title: "Suno | AI Music", icon: <SunoIcon />, line: true },
  { title: "(10) We Are", icon: <YouTubeIcon />, line: true, audio: true },
  { title: "API: Most Songs", icon: <NoteFavicon warm />, line: true },
  { title: "Recording", icon: <GrokIcon />, line: true },
  { title: "2d animation", icon: <GoogleBadge />, line: true },
];

const projects = [
  { title: "Coffee Shop Sessions", genre: "Acoustic", difficulty: 1, pay: "$256", rep: "+2 Rep", days: "4 days" },
  { title: "Street Rap Demo", genre: "Hip-hop", difficulty: 3, pay: "$566", rep: "+5 Rep", days: "4 days" },
  { title: "Electronic Experiment", genre: "Electronic", difficulty: 2, pay: "$420", rep: "+3 Rep", days: "5 days" },
];

const sections = [
  { name: "Studio", icon: <BuildingEmoji /> },
  { name: "Skills", icon: <BarsEmoji /> },
  { name: "Staff", icon: <PeopleEmoji size={24} /> },
  { name: "Bands", icon: <GuitarEmoji /> },
  { name: "Charts", icon: <TrendEmoji /> },
  { name: "Progress", icon: <CalendarEmoji size={24} />, lead: "Era" },
];

const dockApps: { name: string; icon: React.ReactNode; running?: boolean; badge?: string }[] = [
  { name: "Finder", icon: <Finder />, running: true },
  { name: "Launchpad", icon: <Launchpad /> },
  { name: "Calendar", icon: <CalendarApp /> },
  { name: "Reminders", icon: <Reminders />, badge: "18" },
  { name: "Photos", icon: <Photos /> },
  { name: "NVIDIA", icon: <NvidiaApp /> },
  { name: "Music", icon: <MusicApp />, running: true },
  { name: "Word", icon: <WordApp /> },
  { name: "Chrome", icon: <ChromeApp />, running: true },
  { name: "Notes", icon: <NotesApp />, running: true },
  { name: "System Settings", icon: <SettingsApp />, badge: "2" },
  { name: "OBS", icon: <ObsApp /> },
  { name: "Messages", icon: <MessagesApp />, running: true, badge: "131" },
  { name: "iPhone Mirroring", icon: <PhoneApp />, running: true },
  { name: "MIDI Keys", icon: <PianoApp />, running: true },
  { name: "Live", icon: <LiveApp /> },
  { name: "Coil", icon: <CoilApp /> },
  { name: "Splice", icon: <SpliceApp /> },
  { name: "Cube", icon: <CubeApp /> },
  { name: "Cursor", icon: <CursorApp /> },
];

const dockExtras = [
  { name: "Downloads", icon: <FolderApp /> },
  { name: "Screenshots", icon: <StackApp /> },
  { name: "Messages window", icon: <ChatThumb /> },
  { name: "Trash", icon: <TrashApp /> },
];

/* ---------- sections ---------- */

const SystemBar = () => (
  <MenuBar>
    <MenuGroup aria-label="Application menu">
      <FaApple size={34} />
      <MenuItem $strong>Chrome</MenuItem>
      {menus.map((m) => (
        <MenuItem key={m}>{m}</MenuItem>
      ))}
    </MenuGroup>
    <StatusGroup>
      <SiGrammarly size={32} />
      <svg width="36" height="30" viewBox="0 0 36 30">
        <rect x="1.500" y="1.500" width="33" height="22" rx="3" fill="#8d5e59" stroke="currentColor" strokeWidth="2.500" />
        <path d="M12 29h12v-3h-3v-3h-6v3h-3z" fill="currentColor" />
      </svg>
      <svg width="30" height="30" viewBox="0 0 30 30">
        <circle cx="15" cy="15" r="13" fill="none" stroke="currentColor" strokeWidth="2.600" />
        <path d="M11.500 9v12l9-6z" fill="currentColor" />
      </svg>
      <InputSource>UA</InputSource>
      <svg width="40" height="28" viewBox="0 0 40 28" fill="none" stroke="currentColor" strokeWidth="2.600" strokeLinecap="round">
        <path d="M1 10h6l9-8v24l-9-8H1z" fill="currentColor" stroke="none" />
        <path d="M22 9.500a7 7 0 0 1 0 9M27.500 6a13 13 0 0 1 0 16M33 2a19 19 0 0 1 0 24" />
      </svg>
      <svg width="52" height="28" viewBox="0 0 52 28">
        <rect x="1.500" y="2" width="44" height="24" rx="7" fill="none" stroke="#9c7f80" strokeWidth="2.400" />
        <path d="M48.500 10q3 4 0 8z" fill="#9c7f80" />
        <path d="M8 5.500h12l-5 10h5l-1 7H8q-3 0-3-3v-11q0-3 3-3z" fill="currentColor" />
        <path d="M28 3L17 16h6l-3 10 12-14h-6z" fill="currentColor" />
      </svg>
      <svg width="36" height="28" viewBox="0 0 36 28" fill="none" stroke="currentColor" strokeWidth="5">
        <path d="M2.500 10.500a22 22 0 0 1 31 0M9 17.500a13 13 0 0 1 18 0" />
        <path d="M18 27l-5-6q5-3.500 10 0z" fill="currentColor" stroke="none" />
      </svg>
      <svg width="28" height="30" viewBox="0 0 28 30">
        <rect x="1.500" y="1.500" width="25" height="11" rx="5.500" fill="none" stroke="currentColor" strokeWidth="2.400" />
        <circle cx="7.500" cy="7" r="3.500" fill="currentColor" />
        <rect y="16" width="28" height="14" rx="7" fill="currentColor" />
        <circle cx="21" cy="23" r="3.500" fill="#4a2228" />
      </svg>
      <Clock>
        <span>Sun 8 Jun</span>
        <span>22:10</span>
      </Clock>
    </StatusGroup>
  </MenuBar>
);

const BrowserChrome = () => (
  <>
    <TabStrip>
      <TrafficLights>
        <Light $color="#ec6a5e" aria-label="Close" />
        <Light $color="#f4bf4f" aria-label="Minimise" />
        <Light $color="#61c554" aria-label="Zoom" />
      </TrafficLights>
      <Tabs role="tablist">
        {browserTabs.map((t, i) => (
          <Tab key={i} role="tab" aria-selected={!!t.active} $active={t.active} $line={t.line}>
            <Favicon>{t.icon}</Favicon>
            <TabTitle>{t.title}</TabTitle>
            {t.audio && <SpeakerIcon />}
            <CloseSlot aria-label={`Close ${t.title}`}>
              <CloseGlyph />
            </CloseSlot>
          </Tab>
        ))}
      </Tabs>
      <StripTail>
        <NewTab aria-label="New tab">
          <svg width="22" height="22" viewBox="0 0 22 22" stroke="currentColor" strokeWidth="3">
            <path d="M11 1v20M1 11h20" />
          </svg>
        </NewTab>
        <TabSearch aria-label="Search tabs">
          <svg width="18" height="12" viewBox="0 0 18 12" fill="none" stroke="currentColor" strokeWidth="3">
            <path d="M2 2l7 7 7-7" />
          </svg>
        </TabSearch>
      </StripTail>
    </TabStrip>
    <Toolbar>
      <NavButtons>
        <IconButton $dim aria-label="Back">
          <svg width="26" height="26" viewBox="0 0 26 26" fill="none" stroke="currentColor" strokeWidth="3">
            <path d="M25 13H3M13 2L2 13l11 11" />
          </svg>
        </IconButton>
        <IconButton $dim aria-label="Forward">
          <svg width="26" height="26" viewBox="0 0 26 26" fill="none" stroke="currentColor" strokeWidth="3">
            <path d="M1 13h22M13 2l11 11-11 11" />
          </svg>
        </IconButton>
        <IconButton aria-label="Reload">
          <svg width="26" height="26" viewBox="0 0 26 26" fill="none" stroke="currentColor" strokeWidth="3">
            <path d="M23 16A10.500 10.500 0 1 1 21 6.500l3 3M24 1v9h-9" />
          </svg>
        </IconButton>
      </NavButtons>
      <Omnibox>
        <SiteInfo aria-label="Site information">
          <svg width="28" height="28" viewBox="0 0 28 28" fill="none" stroke="currentColor" strokeWidth="3">
            <circle cx="6" cy="7.500" r="3.800" />
            <path d="M14 7.500h12M2 20.500h11" />
            <circle cx="21.500" cy="20.500" r="3.800" />
          </svg>
        </SiteInfo>
        <UrlInput aria-label="Address" defaultValue="humble-guacamole-g46g96v4pxrrf97qr-8081.app.github.dev" />
        <IconButton aria-label="Tracking protection">
          <MdOutlineVisibilityOff size={38} color="#bdbdbd" />
        </IconButton>
        <IconButton aria-label="Bookmark this tab">
          <MdStarBorder size={38} color="#bdbdbd" />
        </IconButton>
      </Omnibox>
      <ToolActions>
        <IconButton aria-label="Notebook extension">
          <svg width="26" height="32" viewBox="0 0 26 32">
            <rect x="1" y="1" width="24" height="30" fill="#f6e6cf" stroke="#2c2a38" strokeWidth="1.500" />
            <path d="M1 28.500h24" stroke="#e8c15a" strokeWidth="3" />
            <rect x="1" y="1" width="5" height="27" fill="#b98a94" />
            <path d="M15.500 23V12h-4l5-7 5 7h-3v11z" fill="#3f8fe8" stroke="#1c3350" strokeWidth="1.200" />
          </svg>
        </IconButton>
        <IconButton aria-label="Extensions">
          <PuzzleIcon />
        </IconButton>
        <ToolDivider />
        <IconButton aria-label="Downloads">
          <MdOutlineFileDownload size={44} />
        </IconButton>
        <IconButton aria-label="Media controls">
          <MdQueueMusic size={40} />
        </IconButton>
        <IconButton aria-label="Profile">
          <svg width="42" height="42" viewBox="0 0 42 42">
            <circle cx="21" cy="21" r="21" fill="#c0dbf8" />
            <circle cx="21" cy="21" r="15" fill="#0b0a1e" />
            <path d="M11 14a13 13 0 0 1 6-5M31 28a13 13 0 0 1-6 5" stroke="#6d6d7c" strokeWidth="2" />
            <circle cx="21" cy="21" r="4.500" fill="#e8525a" />
            <circle cx="21" cy="21" r="1.500" fill="#f5d76a" />
          </svg>
        </IconButton>
        <IconButton aria-label="Menu">
          <svg width="8" height="28" viewBox="0 0 8 28" fill="currentColor">
            <circle cx="4" cy="3.500" r="3" />
            <circle cx="4" cy="14" r="3" />
            <circle cx="4" cy="24.500" r="3" />
          </svg>
        </IconButton>
      </ToolActions>
    </Toolbar>
  </>
);

const GameHeader = () => (
  <StatsBar>
    <Stats>
      <Stat $color="#78dc87">
        <MoneyBag />
        <span>$15,000</span>
      </Stat>
      <Stat $color="#6ba1f4">
        <StarEmoji />
        <span>10 Rep</span>
      </Stat>
      <Stat $color="#f7d04a">
        <CalendarEmoji />
        <DayLabel>Day 2</DayLabel>
      </Stat>
      <Stat $color="#b988f5">
        <PeopleEmoji />
        <span>0 Staff</span>
      </Stat>
      <Stat $color="#f0964a">
        <BoltEmoji />
        <span>3 Perk Points!</span>
      </Stat>
    </Stats>
    <HeaderRight>
      <SettingsButton aria-label="Settings">
        <GearEmoji />
      </SettingsButton>
      <LevelBox>
        <LevelTitle>Level 1</LevelTitle>
        <LevelRow>
          <StarEmoji size={28} />
          <LevelName>Level 1</LevelName>
          <XpText>0/100 XP</XpText>
        </LevelRow>
        <XpTrack role="progressbar" aria-label="Experience" aria-valuenow={0} aria-valuemax={100} />
        <XpDots>
          <span />
          <span />
          <span />
        </XpDots>
      </LevelBox>
    </HeaderRight>
  </StatsBar>
);

const ProjectsPanel = () => (
  <SidePanel>
    <PanelHeader>
      <PanelTitle>Available Projects</PanelTitle>
      <ActionButton $tone="blue">Refresh</ActionButton>
    </PanelHeader>
    <ProjectList>
      {projects.map((p) => (
        <ProjectCard key={p.title}>
          <CardHead>
            <CardTitle>{p.title}</CardTitle>
            <Badge>Independent</Badge>
          </CardHead>
          <CardFacts>
            <Fact>
              Genre: <FactValue $color="#fff">{p.genre}</FactValue>
            </Fact>
            <Fact>
              Difficulty: <FactValue $color="#f0964a">{p.difficulty}</FactValue>
            </Fact>
            <Fact $color="#78dc87">{p.pay}</Fact>
            <Fact $color="#6ba1f4">{p.rep}</Fact>
            <Fact $color="#f7d04a">{p.days}</Fact>
          </CardFacts>
          <ActionButton $tone="green">Start Project</ActionButton>
        </ProjectCard>
      ))}
    </ProjectList>
  </SidePanel>
);

const ChartsPanel = () => (
  <SidePanel>
    <SectionTabs role="tablist">
      {sections.map((s) => (
        <SectionTab key={s.name} role="tab" $active={s.name === "Charts"} aria-selected={s.name === "Charts"}>
          <TabIconLine>
            {s.icon}
            {s.lead}
          </TabIconLine>
          {s.name}
        </SectionTab>
      ))}
    </SectionTabs>
    <DebugText>ChartsPanel EnhancedContact Artist</DebugText>
  </SidePanel>
);

export default function App() {
  return (
    <Desktop>
      <GlobalStyle />
      <SystemBar />
      <BrowserWindow>
        <BrowserChrome />
        <Page>
          <Bubble $x="80px" $y="70px" $size={256} $tint="rgba(120, 40, 130, 0.09)" />
          <Bubble $x="33.4%" $y="80%" $size={160} $tint="rgba(90, 130, 110, 0.09)" />
          <GameHeader />
          <Columns>
            <ProjectsPanel />
            <EmptyCard>
              <BigNotes />
              <EmptyTitle>No Active Project</EmptyTitle>
              <EmptyText>Select a project from the left panel to start working</EmptyText>
            </EmptyCard>
            <ChartsPanel />
          </Columns>
          <Toast role="alert">
            <ToastTitle>Artist Not Found</ToastTitle>
            <ToastBody>Unable to find the specified artist.</ToastBody>
          </Toast>
        </Page>
      </BrowserWindow>
      <DockArea>
        <BackWindow $left="590px" $right="236px" $bottom="85px" $radius="0 0 60px 0" />
        <BackWindow $left="190px" $right="2200px" $bottom="77px" $radius="0 0 0 24px">
          <BackText>{"10/06/2025   Five a com"}</BackText>
        </BackWindow>
        <Dock aria-label="Dock">
          {dockApps.map((a) => (
            <DockItem key={a.name} aria-label={a.name} $running={a.running}>
              <DockArt>{a.icon}</DockArt>
              {a.badge && <DockBadge>{a.badge}</DockBadge>}
            </DockItem>
          ))}
          <DockDivider />
          {dockExtras.map((a) => (
            <DockItem key={a.name} aria-label={a.name}>
              <DockArt>{a.icon}</DockArt>
            </DockItem>
          ))}
        </Dock>
      </DockArea>
    </Desktop>
  );
}
